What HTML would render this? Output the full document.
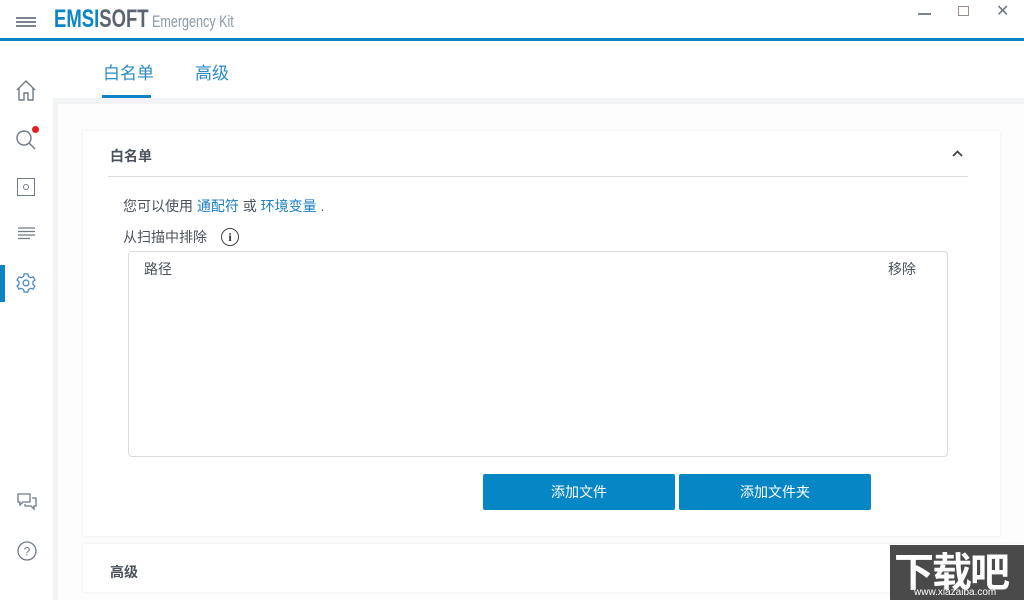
<!DOCTYPE html>
<html><head><meta charset="utf-8"><style>
*{margin:0;padding:0;box-sizing:border-box}
body{width:1024px;height:600px;overflow:hidden;background:#fff;font-family:"Liberation Sans","Noto Sans CJK SC",sans-serif;position:relative;color:#3c4450}
.abs{position:absolute}
.t{font-size:14px}
</style></head><body>
<div class="abs" style="left:16px;top:17px;width:20px;height:2px;background:#7b8590"></div>
<div class="abs" style="left:16px;top:21px;width:20px;height:2px;background:#7b8590"></div>
<div class="abs" style="left:16px;top:25px;width:20px;height:2px;background:#7b8590"></div>
<div class="abs" style="left:54px;top:5px;font-size:25px;font-weight:bold;transform:scaleX(0.74);transform-origin:left;white-space:nowrap"><span style="color:#0a86c6">EMSI</span><span style="color:#5b6570">SOFT</span></div>
<div class="abs" style="left:152px;top:12px;font-size:17px;color:#8d99a4;transform:scaleX(0.74);transform-origin:left;white-space:nowrap">Emergency Kit</div>
<div class="abs" style="left:918px;top:13px;width:13px;height:2px;background:#7b8590"></div>
<div class="abs" style="left:958px;top:6px;width:11px;height:10px;border:1.5px solid #9a8f88"></div>
<div class="abs" style="left:996px;top:1px;font-size:16px;color:#6b7580">✕</div>
<div class="abs" style="left:0;top:38px;width:1024px;height:3px;background:#0a84c6"></div>
<svg class="abs" style="left:14px;top:78px" width="24" height="26" viewBox="0 0 24 26" fill="none" stroke="#6f7a86" stroke-width="1.4"><path d="M3 12L12 3L21 12M5 10V22H10V15H14V22H19V10"/></svg>
<svg class="abs" style="left:14px;top:126px" width="28" height="28" viewBox="0 0 28 28" fill="none" stroke="#6f7a86" stroke-width="1.4"><circle cx="10" cy="12" r="7"/><path d="M15 17L21 23"/></svg>
<div class="abs" style="left:32px;top:126px;width:7px;height:7px;border-radius:50%;background:#e02020"></div>
<div class="abs" style="left:17px;top:178px;width:18px;height:18px;border:1.4px solid #6f7a86"></div>
<div class="abs" style="left:23px;top:184px;width:6px;height:6px;border:1.2px solid #6f7a86;border-radius:50%"></div>
<svg class="abs" style="left:17px;top:226px" width="20" height="16" viewBox="0 0 20 16" stroke="#6f7a86" stroke-width="1.3"><path d="M1 2H18M1 5.5H18M1 9H18M1 12.5H13"/></svg>
<div class="abs" style="left:0;top:265px;width:5px;height:37px;background:#0a84c6"></div>
<svg class="abs" style="left:15px;top:272px" width="22" height="22" viewBox="0 0 24 24" fill="none" stroke="#4a88c0" stroke-width="1.4"><circle cx="12" cy="12" r="3.2"/><path d="M10 2h4l.6 2.8 2.4 1.4 2.7-.9 2 3.4-2.1 1.9v2.8l2.1 1.9-2 3.4-2.7-.9-2.4 1.4L14 22h-4l-.6-2.8-2.4-1.4-2.7.9-2-3.4 2.1-1.9v-2.8L2.3 8.7l2-3.4 2.7.9 2.4-1.4z"/></svg>
<svg class="abs" style="left:16px;top:492px" width="22" height="20" viewBox="0 0 22 20" fill="none" stroke="#6f7a86" stroke-width="1.3"><path d="M2 2H14V10H7L4 13V10H2Z"/><path d="M16 6H20V14H18V17L15 14H9V12"/></svg>
<svg class="abs" style="left:16px;top:540px" width="22" height="22" viewBox="0 0 22 22" fill="none" stroke="#6f7a86" stroke-width="1.3"><circle cx="11" cy="11" r="9"/><text x="11" y="15.5" font-size="12" text-anchor="middle" fill="#6f7a86" stroke="none" font-family="Liberation Sans">?</text></svg>
<div class="abs" style="left:103px;top:59px;font-size:17px;color:#2a8ac4">白名单</div>
<div class="abs" style="left:102px;top:95px;width:49px;height:3px;background:#0a84c6"></div>
<div class="abs" style="left:195px;top:59px;font-size:17px;color:#2a8ac4">高级</div>
<div class="abs" style="left:53px;top:98px;width:971px;height:502px;background:#f2f3f5"></div>
<div class="abs" style="left:58px;top:104px;width:966px;height:496px;background:#fdfdfd"></div>
<div class="abs" style="left:83px;top:131px;width:917px;height:405px;background:#fff;box-shadow:0 0 3px rgba(0,0,0,.08)"></div>
<div class="abs t" style="left:110px;top:146px;font-weight:bold;color:#4a525c">白名单</div>
<svg class="abs" style="left:951px;top:149px" width="13" height="10" viewBox="0 0 13 10" fill="none" stroke="#444" stroke-width="1.8"><path d="M2 7L6.5 2.5L11 7"/></svg>
<div class="abs" style="left:108px;top:176px;width:860px;height:1px;background:#dcdcdc"></div>
<div class="abs t" style="left:123px;top:196px;color:#4a525c">您可以使用 <span style="color:#1a7fc0">通配符</span> 或 <span style="color:#1a7fc0">环境变量</span> .</div>
<div class="abs t" style="left:123px;top:227px;color:#4a525c">从扫描中排除</div>
<div class="abs" style="left:221px;top:228px;width:18px;height:18px;border:1.3px solid #444;border-radius:50%;font-size:12px;text-align:center;line-height:16px;font-weight:bold;font-family:'Liberation Serif',serif;color:#333">i</div>
<div class="abs" style="left:128px;top:251px;width:820px;height:206px;border:1px solid #dcdcdc;border-radius:4px"></div>
<div class="abs t" style="left:144px;top:259px;color:#4a525c">路径</div>
<div class="abs t" style="left:888px;top:259px;color:#4a525c">移除</div>
<div class="abs t" style="left:483px;top:474px;width:192px;height:36px;background:#0786c6;border-radius:2px;color:#fff;text-align:center;line-height:36px">添加文件</div>
<div class="abs t" style="left:679px;top:474px;width:192px;height:36px;background:#0786c6;border-radius:2px;color:#fff;text-align:center;line-height:36px">添加文件夹</div>
<div class="abs" style="left:83px;top:544px;width:941px;height:48px;background:#fff;box-shadow:0 0 3px rgba(0,0,0,.08)"></div>
<div class="abs t" style="left:110px;top:562px;font-weight:bold;color:#4a525c">高级</div>
<div class="abs" style="left:890px;top:545px;width:134px;height:55px;background:#4a4a4a"></div>
<div class="abs" style="left:894px;top:540px;font-size:40px;color:#fff;font-weight:bold;letter-spacing:-2px">下载吧</div>
<div class="abs" style="left:914px;top:587px;font-size:10px;color:#fff">www.xiazaiba.com</div>
</body></html>
